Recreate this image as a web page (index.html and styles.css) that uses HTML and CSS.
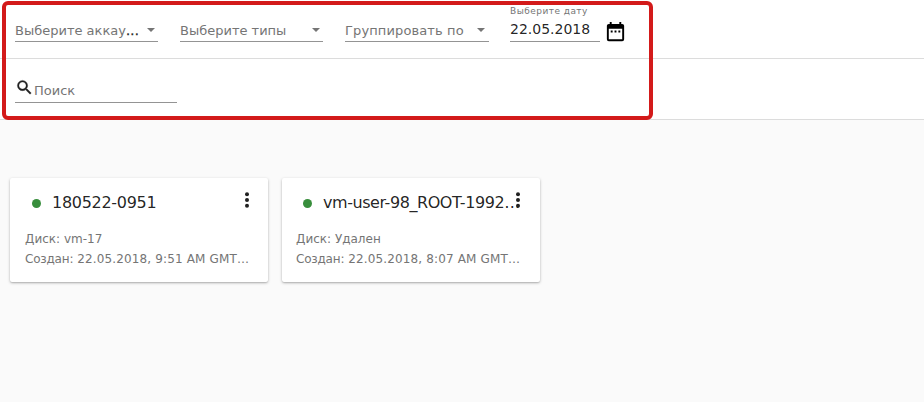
FILE: index.html
```html
<!DOCTYPE html>
<html lang="ru">
<head>
<meta charset="utf-8">
<title>Снимки</title>
<link rel="stylesheet" href="styles.css">
</head>
<body>
<header class="filters">
  <div class="row row-selects">
    <div class="select"><span class="label clipped"><span class="muted">Выберите аккау</span><span class="ellipsis">...</span></span><i class="arrow"></i></div>
    <div class="select"><span class="label muted">Выберите типы</span><i class="arrow"></i></div>
    <div class="select wide"><span class="label muted group">Группировать по</span><i class="arrow"></i></div>
    <div class="date">
      <span class="date-label">Выберите дату</span>
      <span class="date-value">22.05.2018</span>
    </div>
    <svg class="calendar" viewBox="0 0 24 24"><path d="M19 3h-1V1h-2v2H8V1H6v2H5c-1.110 0-2 .9-2 2v14a2 2 0 0 0 2 2h14a2 2 0 0 0 2-2V5a2 2 0 0 0-2-2m0 16H5V8h14zM9 10H7v2h2zm4 0h-2v2h2zm4 0h-2v2h2z"/></svg>
  </div>
  <div class="row row-search">
    <div class="search">
      <svg class="magnifier" viewBox="0 0 24 24"><path d="M9.500 3A6.500 6.500 0 0 1 16 9.500c0 1.610-.59 3.090-1.560 4.230l.27.270h.79l5 5-1.500 1.500-5-5v-.79l-.27-.27A6.520 6.520 0 0 1 9.500 16 6.500 6.500 0 0 1 9.500 3m0 2C7 5 5 7 5 9.500S7 14 9.500 14 14 12 14 9.500 12 5 9.500 5"/></svg>
      <span class="search-label">Поиск</span>
    </div>
  </div>
  <div class="highlight"></div>
</header>
<main class="cards">
  <article class="card">
    <div class="head"><i class="dot"></i><h2 class="title">180522-0951</h2>
      <svg class="more" viewBox="0 0 6 16"><circle cx="3" cy="2.200" r="2"/><circle cx="3" cy="8" r="2"/><circle cx="3" cy="13.800" r="2"/></svg></div>
    <p class="line">Диск: vm-17</p>
    <p class="line"><span class="key">Создан:</span> 22.05.2018, 9:51 AM GMT…</p>
  </article>
  <article class="card second">
    <div class="head"><i class="dot"></i><h2 class="title">vm-user-98_ROOT-1992…</h2>
      <svg class="more" viewBox="0 0 6 16"><circle cx="3" cy="2.200" r="2"/><circle cx="3" cy="8" r="2"/><circle cx="3" cy="13.800" r="2"/></svg></div>
    <p class="line">Диск: Удален</p>
    <p class="line"><span class="key">Создан:</span> 22.05.2018, 8:07 AM GMT…</p>
  </article>
</main>
</body>
</html>
```
FILE: styles.css
```css
* { box-sizing: border-box; }
body {
  margin: 0;
  min-height: 402px;
  background: #fafafa;
  color: rgba(0, 0, 0, .87);
  font-family: "DejaVu Sans", sans-serif;
  overflow: hidden;
}
.filters { position: relative; background: #fff; }
.row { display: flex; padding-left: 15px; border-bottom: 1px solid #dcdcdc; }
.row-selects { height: 59px; }
.row-search { height: 61px; }
.select {
  display: flex;
  justify-content: space-between;
  width: 143px;
  height: 42px;
  margin-right: 22px;
  padding: 21px 3px 0 0;
  border-bottom: 1px solid #949494;
}
.select.wide { width: 144px; margin-right: 21px; padding-right: 4px; }
.label { font-size: 13px; line-height: 20px; white-space: nowrap; }
.muted { color: #757575; }
.ellipsis { letter-spacing: .3px; -webkit-text-stroke: .3px #212121; }
.group { letter-spacing: .12px; }
.arrow {
  margin-top: 7px;
  height: 4px;
  border: 4px solid transparent;
  border-top: 4px solid #757575;
  border-bottom: 0;
}
.date {
  display: flex;
  flex-direction: column;
  width: 90px;
  height: 42px;
  padding-top: 5px;
  border-bottom: 1px solid #949494;
}
.date-label { font-size: 9px; line-height: 12px; letter-spacing: .46px; color: #757575; white-space: nowrap; }
.date-value { font-size: 14px; line-height: 20px; margin-top: 2px; }
.calendar { width: 23px; height: 23px; margin: 21px 0 0 4px; fill: #000; }
.search {
  display: flex;
  width: 162px;
  height: 44px;
  border-bottom: 1px solid #949494;
}
.magnifier { width: 19px; height: 19px; margin-top: 19px; fill: #212121; stroke: #212121; stroke-width: .4px; }
.search-label { margin-top: 22px; font-size: 13px; line-height: 20px; color: #757575; }
.highlight {
  position: absolute;
  left: 2px;
  top: 1px;
  width: 651px;
  height: 119px;
  border: 4px solid #d31a1a;
  border-radius: 6px;
}
.cards { display: flex; gap: 14px; padding: 58px 10px 0; }
.card {
  width: 258px;
  height: 104px;
  padding: 13px 15px 0;
  background: #fff;
  border-radius: 2px;
  box-shadow: 0 1px 3px rgba(0, 0, 0, .28), 0 1px 1px rgba(0, 0, 0, .08);
}
.head { display: flex; height: 38px; padding-left: 7px; }
.card.second { padding-left: 14px; }
.dot { flex: none; width: 9px; height: 9px; margin-top: 8px; border-radius: 50%; background: #388e3c; }
.title { flex: 1; min-width: 0; margin: 1px 0 0 11px; font-size: 16px; line-height: 22px; font-weight: 400; letter-spacing: -.3px; white-space: nowrap; }
.second .title { letter-spacing: -.44px; }
.more { flex: none; width: 6px; height: 16px; margin: 1px 3px 0 0; fill: #212121; }
.second .more { margin-right: 4px; }
.line { margin: 0; font-size: 12px; line-height: 20px; letter-spacing: .14px; color: #757575; white-space: nowrap; }
.line:nth-of-type(1) { letter-spacing: 0; }
.key { letter-spacing: -.2px; }
```
